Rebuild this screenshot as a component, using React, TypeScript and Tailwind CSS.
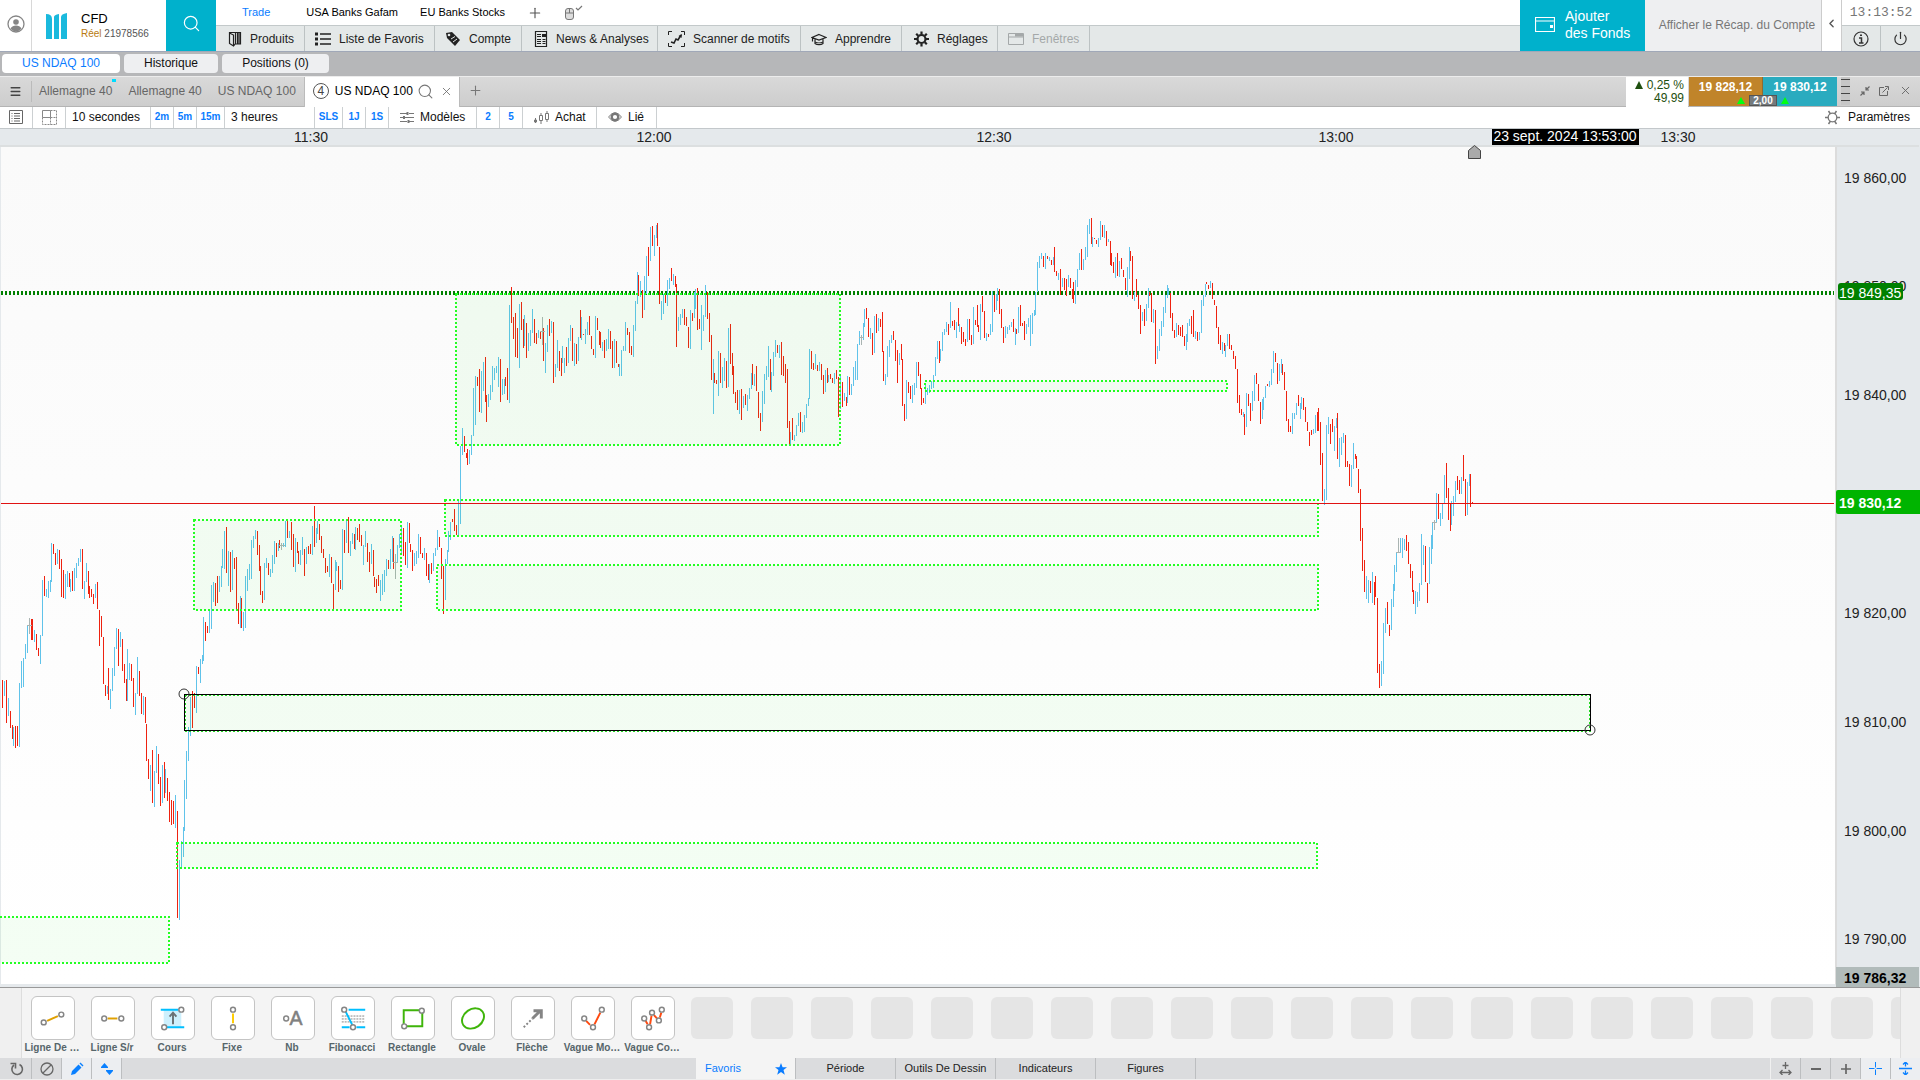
import type { ReactNode } from "react";
import { ChevronLeft, Menu, Plus, Power, Search, X } from "lucide-react";

// One entry per bar: direction (r = down, b = up, g = unchanged), x, high, low
const BARS = `
r2 680 708,b4 681 696,r6 680 723,b8 698 716,r10 711 728,r12 725 739,b13 727 746,r15 726 748,r17 726 746,b19 683 747,
b21 661 688,b23 658 687,b25 644 659,b27 625 653,g29 618 634,r31 619 640,r32 619 640,b34 630 642,r36 634 650,r38 648 656,
b40 635 664,b42 580 636,r44 576 596,b46 589 597,b48 581 598,b50 580 592,b51 543 582,r53 544 554,r55 553 565,b57 549 564,
r59 550 569,r61 559 597,r63 570 598,b65 574 599,b67 571 587,r69 573 587,b70 579 592,r72 571 591,b74 568 591,b76 563 578,
b78 558 566,b80 549 562,r82 549 589,b84 581 599,b86 563 582,r88 571 594,r89 586 598,r91 589 597,r93 594 604,b95 584 598,
r97 582 609,r99 610 646,r101 616 637,r103 637 684,r105 685 696,b107 686 694,r108 668 700,b110 689 709,b112 668 691,
b114 647 676,b116 628 649,r118 629 666,b120 632 647,r122 639 671,r124 664 683,r126 679 701,b127 649 701,b129 663 680,
r131 664 681,r133 678 707,b135 693 715,b137 657 694,r139 671 696,r141 693 714,b143 696 715,r145 697 723,r146 724 761,
r148 759 779,b150 765 791,r152 750 803,b154 771 807,b156 746 773,r158 754 784,r160 777 806,b162 765 803,r164 762 798,
b165 769 793,r167 778 801,r169 792 822,r171 800 825,r173 801 824,b175 795 828,r177 811 918,b179 860 920,b181 841 868,
b183 827 857,b184 780 831,b186 751 799,b188 727 761,b190 697 736,r192 691 728,r194 693 708,b196 666 713,r198 667 674,
b200 659 683,b202 655 664,b203 617 661,r205 622 641,r207 626 633,b209 610 633,b211 585 629,b213 582 602,r215 583 606,
r217 576 603,b219 576 592,b221 566 587,b222 549 568,b224 531 569,r226 527 573,b228 551 586,r230 552 592,b232 550 590,
r234 558 569,r236 557 609,r238 603 624,b240 596 628,r241 598 628,b243 612 631,b245 576 628,b247 569 591,b249 564 580,
b251 540 579,b253 536 548,b255 530 539,r257 531 555,r259 545 571,r260 566 595,r262 591 603,b264 563 600,b266 558 568,
r268 563 575,b270 569 577,b272 555 573,b274 541 564,r276 543 557,b278 543 551,r279 540 548,g281 543 550,b283 543 547,
b285 521 547,r287 520 538,b289 531 538,r291 522 550,r293 534 567,b295 538 572,r297 542 553,r298 551 564,b300 550 565,
b302 537 555,r304 549 576,b306 547 564,r308 546 554,r310 544 554,b312 526 555,r314 506 547,b316 528 543,b317 521 534,
r319 524 540,r321 536 553,r323 549 558,r325 558 573,r327 566 572,b329 554 577,r331 557 583,r333 584 610,b335 560 590,
b336 562 571,r338 566 592,r340 580 589,b342 529 590,r344 530 553,b346 520 543,r348 517 553,b350 541 556,b352 533 544,
r354 534 549,b355 527 550,r357 528 540,r359 524 542,r361 535 546,b363 545 565,b365 531 547,r367 543 562,r369 552 572,
b371 544 564,r373 550 576,r374 577 587,r376 579 593,r378 575 586,b380 580 601,b382 574 595,b384 570 592,b386 559 576,
r388 560 569,b390 549 569,b392 536 562,r393 538 569,g395 554 579,b397 545 563,b399 534 548,b401 527 555,r403 528 556,
r405 542 565,b407 522 568,r409 523 543,r410 544 552,r412 550 571,b414 553 566,b416 551 564,b418 534 558,r420 537 554,
r422 553 558,b424 548 560,r426 553 576,r428 564 580,b429 564 583,r431 563 574,b433 553 571,b435 548 556,b437 530 550,
r439 537 547,r441 548 579,r443 566 614,b445 559 600,b447 550 564,b448 531 552,b450 522 540,r452 519 522,r454 509 531,
r456 525 535,b458 500 535,b460 446 524,b462 428 455,r464 436 452,r466 453 458,r467 449 465,b469 450 464,b471 435 455,
b473 388 436,b475 376 425,r477 377 386,r479 369 412,b481 371 413,b483 362 391,r485 357 402,r486 395 422,b488 394 407,
b490 385 400,b492 366 392,b494 368 380,b496 366 373,b498 357 387,r500 359 402,b502 379 395,b504 379 394,r505 377 386,
r507 368 400,b509 305 403,r511 287 323,r513 317 339,r515 313 357,r517 328 358,b519 304 368,r521 302 330,r523 319 348,
b524 315 346,r526 323 358,b528 333 351,b530 330 346,b532 309 333,r534 319 343,r536 333 344,b538 330 338,r540 331 339,
g542 317 345,r543 328 361,b545 343 373,b547 325 352,r549 319 336,b551 321 333,r553 322 383,b555 364 377,b557 340 368,
r559 351 371,r561 358 376,b562 346 363,b564 358 373,r566 347 366,b568 338 363,b570 325 341,r572 328 361,b574 343 366,
r576 344 364,b578 337 361,r580 310 338,b581 317 340,r583 334 335,b585 329 344,b587 322 335,r589 316 335,r591 336 349,
r593 349 355,b595 316 358,r597 318 330,r599 331 345,r600 332 348,b602 342 351,r604 340 358,b606 339 351,b608 329 349,
r610 331 349,r612 341 368,b614 339 368,r616 341 363,r618 364 367,b619 364 376,b621 350 376,b623 346 351,b625 322 351,
r627 328 335,r629 332 353,r631 346 355,b633 325 357,b635 301 331,b637 272 304,r638 275 296,b640 281 297,r642 290 318,
b644 276 310,b646 256 294,r648 247 276,b650 227 261,r652 226 246,b654 235 256,b656 225 238,r657 223 246,r659 247 304,
b661 301 320,b663 294 314,r665 294 303,b667 280 306,b669 278 289,r671 268 281,b673 274 285,r675 276 287,r676 284 347,
b678 317 331,b680 314 325,b682 309 318,r684 309 325,r686 317 326,r688 327 348,b690 310 349,r692 313 321,b694 292 318,
b695 289 309,r697 288 330,r699 319 329,b701 305 350,b703 315 331,b705 285 317,r707 292 319,r709 313 342,r711 335 380,
b713 359 414,r714 373 383,r716 380 384,b718 351 396,r720 353 383,b722 367 388,b724 358 381,r726 361 388,b728 328 387,
r730 324 364,r732 353 375,r733 366 394,r735 392 403,r737 390 410,b739 390 414,r741 389 420,b743 396 408,r745 394 405,
b747 395 411,b749 388 399,b751 373 389,r752 364 385,b754 374 386,r756 366 391,r758 392 418,r760 413 431,b762 391 422,
b764 374 404,b766 366 380,b768 346 377,r770 359 390,b771 372 392,b773 352 376,b775 340 357,r777 345 353,b779 345 358,
r781 342 375,r783 356 376,r785 364 383,r787 369 428,r789 421 444,b790 432 444,r792 418 440,b794 435 441,b796 425 436,
b798 413 426,r800 412 432,b802 422 433,b804 415 432,b806 404 418,b808 398 406,b809 349 399,r811 351 369,r813 363 370,
b815 354 369,r817 365 371,b819 362 371,r821 364 380,r823 375 394,b825 370 392,r827 368 383,b828 375 382,r830 374 379,
r832 378 383,b834 373 384,r836 370 379,r838 377 417,b840 375 409,r842 382 407,b844 393 401,r846 397 406,b847 376 403,
r849 377 395,b851 384 395,b853 367 386,b855 361 380,b857 344 380,b859 331 345,g861 335 345,b863 323 340,b864 309 327,
r866 308 319,r868 318 337,b870 328 339,r872 333 355,b874 316 353,r876 314 333,b878 318 331,r880 319 327,r882 312 352,
r883 351 381,b885 374 385,b887 346 377,b889 340 357,b891 335 343,r893 331 340,r895 340 361,r897 350 383,b899 353 365,
r901 344 360,r902 359 406,r904 404 421,b906 380 419,r908 382 393,r910 386 399,b912 385 403,b914 383 395,b916 362 388,
r918 362 376,r920 374 389,r921 388 405,r923 398 403,b925 383 404,b927 388 395,b929 385 393,b931 381 389,b933 375 388,
b935 357 376,b937 341 359,r939 341 363,b940 349 361,b942 332 351,b944 329 335,b946 322 332,r948 324 335,b950 302 328,
r952 321 326,r954 320 330,b956 322 338,r958 308 326,b959 324 332,r961 327 344,r963 332 342,r965 339 346,b967 319 342,
r969 319 340,r971 335 345,b973 307 344,r975 320 325,r977 305 327,r978 325 332,b980 304 340,r982 296 312,r984 311 338,
b986 333 341,r988 334 337,b990 324 335,b992 291 332,r994 295 312,b996 294 310,b997 288 301,r999 289 314,r1001 309 328,
r1003 327 343,b1005 326 338,b1007 327 334,b1009 325 330,b1011 322 327,r1013 319 332,b1015 328 345,r1016 329 334,
b1018 307 333,r1020 305 326,r1022 323 326,r1024 321 340,b1026 324 334,b1028 318 327,b1030 315 346,b1032 313 334,
b1034 310 316,b1035 292 315,b1037 262 292,b1039 256 268,b1041 253 259,r1043 256 267,b1045 253 269,r1047 256 259,
b1049 257 261,r1051 260 265,b1053 257 265,r1054 247 272,r1056 271 276,b1058 273 280,r1060 269 295,b1062 278 287,
r1064 278 290,r1066 279 296,b1068 275 287,r1070 278 288,r1072 289 299,r1073 282 303,b1075 280 304,b1077 269 287,
b1079 253 270,r1081 249 270,b1083 259 270,b1085 247 260,b1087 225 257,b1089 219 234,r1091 218 244,b1092 237 247,
r1094 238 239,r1096 240 244,b1098 238 247,b1100 221 240,r1102 225 237,b1104 225 238,r1106 231 246,b1108 239 242,
r1110 241 265,r1111 253 266,r1113 262 273,b1115 257 278,r1117 253 276,b1119 261 277,r1121 258 269,r1123 270 277,
r1125 278 290,b1127 267 297,b1129 247 279,r1130 251 261,r1132 256 299,b1134 292 301,r1136 279 297,r1138 295 309,
r1140 305 334,b1142 312 321,r1144 309 326,b1146 304 321,b1148 288 308,r1149 292 296,r1151 293 322,b1153 309 323,
r1155 310 364,b1157 346 359,b1159 329 351,b1161 321 336,b1163 307 327,b1165 295 313,b1167 285 298,b1168 288 295,
r1170 293 318,r1172 313 331,r1174 330 338,b1176 323 337,r1178 325 335,r1180 327 336,r1182 325 337,r1184 336 346,
b1186 334 350,b1187 323 342,b1189 319 326,r1191 316 334,r1193 310 337,b1195 331 339,r1197 332 341,b1199 332 340,
b1201 300 333,b1203 295 306,b1205 284 297,r1206 282 284,r1208 285 289,b1210 281 288,r1212 283 299,r1214 300 305,
r1216 306 328,r1218 327 344,r1220 335 350,b1222 342 354,r1224 343 351,b1225 345 357,b1227 334 346,r1229 334 349,
r1231 345 350,r1233 351 359,r1235 356 369,r1237 369 403,r1239 395 413,r1241 409 415,b1243 412 417,r1244 414 435,
b1246 393 427,r1248 394 406,r1250 403 421,b1252 391 411,b1254 375 401,r1256 373 384,r1258 384 401,r1260 402 424,
b1262 399 419,b1263 397 410,b1265 386 398,r1267 384 386,b1269 381 387,b1271 369 385,b1273 351 373,r1275 353 362,
r1277 363 384,b1279 364 381,b1281 359 373,r1282 364 375,r1284 372 390,r1286 391 421,r1288 419 432,r1290 426 432,
b1292 413 434,b1294 413 419,b1296 403 415,r1298 395 406,b1300 403 419,b1301 397 409,r1303 398 410,r1305 407 422,
r1307 422 431,r1309 432 446,r1311 430 435,b1313 429 434,b1315 415 433,r1317 412 431,r1318 408 431,r1320 422 465,
r1322 453 501,b1324 489 505,b1326 425 500,b1328 417 434,r1330 424 444,r1332 419 432,b1334 426 451,b1336 418 428,
r1337 413 459,b1339 438 467,b1341 437 455,b1343 433 443,r1345 435 467,r1347 461 467,r1349 464 486,b1351 465 487,
b1353 443 469,r1355 454 459,r1356 456 468,r1358 469 493,r1360 489 541,r1362 528 571,r1364 560 592,b1366 576 599,
b1368 580 603,r1370 581 593,b1372 572 603,r1374 582 605,r1375 576 597,r1377 598 673,r1379 664 688,b1381 661 686,
b1383 623 674,b1385 608 633,r1387 602 624,r1389 625 636,b1391 599 630,b1393 584 607,b1394 565 591,b1396 552 572,
g1398 538 553,b1400 538 553,b1402 538 558,b1404 539 550,r1406 535 551,r1408 542 564,r1410 564 578,r1412 571 592,
r1413 590 604,b1415 591 614,b1417 592 607,b1419 583 601,b1421 534 585,b1423 545 565,r1425 546 582,r1427 583 603,
b1429 547 584,b1431 535 564,b1432 522 549,g1434 520 530,b1436 493 523,r1438 494 519,b1440 513 526,b1442 504 519,
b1444 475 504,r1446 463 498,r1448 488 520,r1450 504 531,b1451 501 525,b1453 496 516,b1455 481 502,r1457 476 490,
r1459 480 494,b1461 477 494,r1463 455 481,r1465 479 516,b1467 482 515,b1469 474 486,r1470 474 507,r1472 502 504`;

function barPath(kind: string) {
  return BARS.split(",")
    .map((b) => b.trim())
    .filter((b) => b[0] === kind)
    .map((b) => {
      const [x, high, low] = b.slice(1).split(" ").map(Number);
      return `M${x} ${high}h1V${low}h-1z`;
    })
    .join("");
}

// x, y, width, height
const ZONES = [
  [194, 520, 207, 90],
  [-4, 917, 173, 46],
  [177, 843, 1140, 25],
  [445, 500, 873, 36],
  [437, 565, 881, 45],
  [456, 294, 384, 151],
  [925, 381, 302, 10],
];

const TIMES = [
  { x: 311, label: "11:30" },
  { x: 654, label: "12:00" },
  { x: 994, label: "12:30" },
  { x: 1336, label: "13:00" },
  { x: 1678, label: "13:30" },
];

const PRICES = [
  { y: 178, label: "19 860,00" },
  { y: 286, label: "19 850,00" },
  { y: 395, label: "19 840,00" },
  { y: 613, label: "19 820,00" },
  { y: 722, label: "19 810,00" },
  { y: 831, label: "19 800,00" },
  { y: 939, label: "19 790,00" },
];

type IconProps = { w?: number; h?: number; className?: string; children: ReactNode };

function Icon({ w = 16, h = 16, className = "", children }: IconProps) {
  return (
    <svg width={w} height={h} viewBox={`0 0 ${w} ${h}`} fill="none" stroke="currentColor" className={`shrink-0 ${className}`} aria-hidden="true">
      {children}
    </svg>
  );
}

const NAV = [
  {
    label: "Produits",
    width: "w-[89px] pl-3",
    icon: (
      <Icon w={14}>
        <path d="M1.500 1.500h6v11l-2 2.500-4-2.500zM7.500 1.500h5v11.500h-5M9.500 2v11M11 2v11M1.500 2l4 2v11" strokeWidth="1.200" />
      </Icon>
    ),
  },
  {
    label: "Liste de Favoris",
    width: "w-[130px] pl-2.5",
    icon: (
      <Icon>
        <path d="M5 3h11M5 8h11M5 13h11" strokeWidth="1.500" />
        <path d="M0 3h3M0 8h3M0 13h3" strokeWidth="3" />
      </Icon>
    ),
  },
  {
    label: "Compte",
    width: "w-[87px] pl-2.5",
    icon: (
      <Icon>
        <path d="M1 2l6-1 8 8-5 6-8-8z" fill="currentColor" stroke="none" />
        <circle cx="4" cy="4" r="1.300" fill="#e4e8e8" stroke="none" />
        <path d="M6 8l4-2.500M8 11l4-3" stroke="#e4e8e8" strokeWidth="1" />
      </Icon>
    ),
  },
  {
    label: "News & Analyses",
    width: "w-[136px] pl-3",
    icon: (
      <Icon w={14}>
        <path d="M1.500 .500h11v15h-11z" strokeWidth="1.200" />
        <path d="M3 3.500h4M3 5.500h4M3 8.500h4M3 10.500h4M3 12.500h4M8.500 8.500h3M8.500 10.500h3M8.500 12.500h3" />
        <path d="M8 3h4v3H8z" fill="currentColor" stroke="none" />
      </Icon>
    ),
  },
  {
    label: "Scanner de motifs",
    width: "w-[143px] pl-2.5",
    icon: (
      <Icon w={17}>
        <path d="M.500 4V.500H4M13 .500h3.500V4M.500 12v3.500H4M13 15.500h3.500V12" />
        <path d="M3 11l3 1 2-4 2 1 3-5" strokeWidth="1.600" />
        <path d="M14 3l-.500 4L10.500 5z" fill="currentColor" stroke="none" />
      </Icon>
    ),
  },
  {
    label: "Apprendre",
    width: "w-[101px] pl-2.5",
    icon: (
      <Icon>
        <path d="M8 3.500L15 6.500 8 9 1 6.500zM4 8v4.500c2 1.500 6 1.500 8 0V8M4 11c2 1 6 1 8 0M1.500 7v3.500" strokeWidth="1.200" />
      </Icon>
    ),
  },
  {
    label: "Réglages",
    width: "w-[96px] pl-3",
    icon: (
      <Icon w={15}>
        <circle cx="7.500" cy="8" r="4" strokeWidth="2.200" />
        <path d="M7.500 .500v3M7.500 12.500v3M0 8h3M12 8h3M2.200 2.700l2 2M10.800 11.300l2 2M2.200 13.300l2-2M10.800 4.700l2-2" strokeWidth="2.200" />
      </Icon>
    ),
  },
];

const TILES = [
  {
    label: "Ligne De …",
    art: (
      <>
        <circle cx="12" cy="26" r="2.500" />
        <circle cx="30" cy="18" r="2.500" />
        <path d="M15.500 24.500L26.500 19.500" stroke="#e0a000" strokeWidth="2" />
      </>
    ),
  },
  {
    label: "Ligne S/r",
    art: (
      <>
        <path d="M16 22h10" stroke="#e0a000" strokeWidth="2" />
        <circle cx="12.500" cy="22" r="2.500" />
        <circle cx="30" cy="22" r="2.500" />
      </>
    ),
  },
  {
    label: "Cours",
    art: (
      <>
        <path d="M12 13h18v18H12z" fill="#cdf0fd" stroke="none" />
        <path d="M9 13h18M15 31h18" stroke="#00bfff" strokeWidth="2" />
        <path d="M21.500 28V17M18 20l3.500-4 3.500 4" stroke="#6a7275" strokeWidth="2" />
        <circle cx="30" cy="13" r="2.500" fill="#fff" />
        <circle cx="12.500" cy="31" r="2.500" fill="#fff" />
      </>
    ),
  },
  {
    label: "Fixe",
    art: (
      <>
        <path d="M21.500 17v10" stroke="#ffcc00" strokeWidth="2" />
        <circle cx="21.500" cy="13" r="2.500" />
        <circle cx="21.500" cy="31" r="2.500" />
      </>
    ),
  },
  {
    label: "Nb",
    art: (
      <>
        <circle cx="14.500" cy="22" r="2.500" />
        <text x="18" y="29" fontSize="20" fill="#808080" stroke="#808080" strokeWidth=".5">A</text>
      </>
    ),
  },
  {
    label: "Fibonacci",
    art: (
      <>
        <path d="M10 19.500h24M10 22.500h24M10 25.500h24" strokeWidth="1" strokeDasharray="2 1" />
        <path d="M17 13h17M10 31h8M25 31h9M14 15l7 14" stroke="#00bfff" strokeWidth="2" />
        <circle cx="12.500" cy="13" r="2.500" fill="#fff" />
        <circle cx="21.500" cy="31" r="2.500" fill="#fff" />
      </>
    ),
  },
  {
    label: "Rectangle",
    art: (
      <>
        <path d="M12 13.500h19V30H12z" stroke="#3fb50a" strokeWidth="2" />
        <circle cx="30.500" cy="14" r="2.500" fill="#fff" />
        <circle cx="12.500" cy="30" r="2.500" fill="#fff" />
      </>
    ),
  },
  {
    label: "Ovale",
    art: <ellipse cx="21.500" cy="22" rx="12" ry="9.500" transform="rotate(-35 21.500 22)" stroke="#3fb50a" strokeWidth="2" />,
  },
  {
    label: "Flèche",
    art: (
      <>
        <path d="M12 31l9-9" strokeWidth="2" strokeDasharray="2 2" />
        <path d="M21 22l8-8M22 14h8v8" strokeWidth="3" />
      </>
    ),
  },
  {
    label: "Vague Mo…",
    art: (
      <>
        <path d="M14.500 24.500l4 4M23 28l6-12" stroke="#ff4a10" strokeWidth="2" />
        <circle cx="12.500" cy="22" r="2.500" />
        <circle cx="21.500" cy="31" r="2.500" />
        <circle cx="30.500" cy="13" r="2.500" />
      </>
    ),
  },
  {
    label: "Vague Co…",
    art: (
      <>
        <path d="M14 24.500l2 3.500M18.500 28l1.500-9M22.500 18.500l3 3.500M28.500 21l1.500-5" stroke="#ff4a10" strokeWidth="2" />
        <circle cx="12.500" cy="22" r="2.500" />
        <circle cx="17.500" cy="31" r="2.500" />
        <circle cx="20.500" cy="16" r="2.500" />
        <circle cx="27.500" cy="24" r="2.500" />
        <circle cx="30.500" cy="13" r="2.500" />
      </>
    ),
  },
];

function Header() {
  return (
    <header className="flex h-[52px] border-b border-[#a0a8b8] bg-white">
      <button aria-label="Profil" className="flex w-8 shrink-0 items-center justify-center border-r border-[#d8d8d8] pb-1 text-[#858585]">
        <Icon w={18} h={18}>
          <circle cx="9" cy="9" r="8" strokeWidth="1.300" />
          <circle cx="9" cy="7" r="2.800" fill="currentColor" stroke="none" />
          <path d="M3.500 13.500c2-4 9-4 11 0-3 4-8 4-11 0z" fill="currentColor" stroke="none" />
        </Icon>
      </button>
      <div className="flex w-[134px] shrink-0 items-center pl-3.5">
        <Icon w={21} h={26} className="text-[#1ab9dd]">
          <path d="M0 1q6 0 6 5v20H0zM8 4q0-2 5-3v25H8zM15 4q0-3 6-4v26h-6z" fill="currentColor" stroke="none" />
        </Icon>
        <div className="ml-3.5">
          <div className="text-[13px] leading-[17px] text-black">CFD</div>
          <div className="whitespace-nowrap text-[10px] leading-[14px] text-[#555]">
            <span className="text-[#b87a10]">Réel</span> 21978566
          </div>
        </div>
      </div>
      <button aria-label="Rechercher" className="flex w-[50px] shrink-0 items-center justify-center bg-[#00b1cc] pb-1 text-white">
        <Search size={19} strokeWidth={1.5} />
      </button>

      <div className="flex min-w-0 flex-1 flex-col">
        <div className="flex h-[25px] items-center gap-[22px] pl-[26px] text-[11px] text-black">
          <a href="#trade" className="mr-3.5 text-[#0a7cff]">Trade</a>
          <a href="#usa">USA Banks Gafam</a>
          <a href="#eu">EU Banks Stocks</a>
          <button aria-label="Ajouter une disposition" className="text-[#555]"><Plus size={16} strokeWidth={1.7} /></button>
          <button aria-label="Souris" className="text-[#777]">
            <Icon w={18} h={16}>
              <rect x=".5" y="3.500" width="8" height="11" rx="2.500" fill="#ddd" />
              <path d="M.500 8h8M4.500 3.500V8" />
              <path d="M11 3l2 2 4-4" strokeWidth="1.200" />
            </Icon>
          </button>
        </div>
        <nav className="flex flex-1 border-t border-[#c3c9ca] bg-[#e4e8e8] text-xs text-[#222]">
          {NAV.map((item) => (
            <a key={item.label} href="#nav" className={`flex shrink-0 items-center gap-2 whitespace-nowrap border-r border-[#bcc2c3] ${item.width}`}>
              {item.icon}
              {item.label}
            </a>
          ))}
          <button disabled className="flex w-[92px] items-center gap-2 border-r border-[#bcc2c3] pl-2.5 text-[#a4a8a9]">
            <Icon h={12}>
              <path d="M.500 .500h15v11H.500zM.500 4h15" />
              <path d="M7 1h8v2.500H7z" fill="currentColor" stroke="none" />
            </Icon>
            Fenêtres
          </button>
        </nav>
      </div>

      <button className="flex w-[125px] shrink-0 items-center gap-2.5 bg-[#00b1cc] pb-2.5 pl-[15px] text-left text-sm leading-[17px] text-white">
        <Icon w={20} h={15} className="mt-2">
          <path d="M.500 .500h19v14H.500zM.500 4h19" strokeWidth="1.200" />
          <path d="M15 8h3v3h-3z" fill="currentColor" stroke="none" />
        </Icon>
        <span className="mt-2">Ajouter<br />des Fonds</span>
      </button>
      <button className="w-[177px] shrink-0 whitespace-nowrap border-r border-[#ccc] bg-[#eeeff1] pb-0.5 pl-2 text-xs text-[#777]">Afficher le Récap. du Compte</button>
      <button aria-label="Réduire" className="flex w-[19px] shrink-0 items-center justify-center pb-1 text-[#555]"><ChevronLeft size={13} strokeWidth={2.500} /></button>
      <div className="flex w-[79px] shrink-0 flex-col border-l border-[#ccc]">
        <time className="flex h-[25px] items-center justify-center font-['Liberation_Mono',monospace] text-[13px] text-[#777]">13:13:52</time>
        <div className="grid flex-1 grid-cols-2 border-t border-[#c3c9ca] bg-[#e4e8e8] text-[#333]">
          <button aria-label="Informations" className="flex items-center justify-center border-r border-[#bcc2c3]">
            <Icon>
              <circle cx="8" cy="8" r="7" strokeWidth="1.200" />
              <path d="M6 7h2.500v5M6 12h4.500" strokeWidth="1.500" />
              <path d="M7 3.500h2v1.500H7z" fill="currentColor" stroke="none" />
            </Icon>
          </button>
          <button aria-label="Déconnexion" className="flex items-center justify-center"><Power size={15} strokeWidth={1.900} /></button>
        </div>
      </div>
    </header>
  );
}

function WorkspaceTabs() {
  return (
    <div className="flex h-6 gap-1 bg-[#b6b7b9] px-0.5 pt-0.5 text-xs leading-[18px] text-[#111]">
      <button className="h-[19px] w-[118px] rounded-sm bg-white pb-px text-[#0a7cff]">US NDAQ 100</button>
      <button className="h-[19px] w-[94px] rounded-sm bg-[#eeeff1] pb-px">Historique</button>
      <button className="h-[19px] w-[107px] rounded-sm bg-[#eeeff1] pb-px">Positions (0)</button>
    </div>
  );
}

function ChartTabs() {
  return (
    <div className="flex h-[31px] border-t border-b border-t-[#ececec] border-b-[#b4b4b4] bg-linear-to-b from-[#d9d9d9] to-[#cdcdcd] text-xs text-[#666]">
      <button aria-label="Menu" className="my-1 flex w-8 items-center justify-center border-r border-[#bbb] text-[#444]"><Menu size={13} strokeWidth={2.500} /></button>
      <button className="relative ml-[7px] pb-0.5">
        Allemagne 40
        <span className="absolute -right-1 top-0.5 h-[3px] w-1 bg-[#00dcff]" />
      </button>
      <button className="ml-4 pb-0.5">Allemagne 40</button>
      <button className="ml-4 mr-2 pb-0.5">US NDAQ 100</button>
      <div className="-mb-px flex w-[156px] items-center border-x border-[#bbb] bg-white pb-0.5 pl-2 text-black">
        <span className="mr-1.5 flex size-4 items-center justify-center rounded-full border border-[#555] text-[#444]">4</span>
        US NDAQ 100
        <button aria-label="Chercher un produit" className="ml-1 text-[#777]"><Search size={17} strokeWidth={1.500} /></button>
        <button aria-label="Fermer l'onglet" className="ml-1.5 text-[#666]"><X size={13} strokeWidth={1.500} /></button>
      </div>
      <button aria-label="Nouvel onglet" className="ml-2 pb-0.5 text-[#777]"><Plus size={15} strokeWidth={1.700} /></button>

      <div className="-mb-px ml-auto w-[62px] bg-white pr-1 text-right leading-[13px] text-[#1f5010]">
        <div className="mt-0.5 whitespace-nowrap"><span className="mr-1 inline-block h-0 w-0 border-x-[4px] border-b-[8px] border-x-transparent" />0,25 %</div>
        <div>49,99</div>
      </div>
      <div className="relative ml-px flex font-bold text-white">
        <button className="w-[74px] border-r border-[#8f6a30] bg-[#c0842a] pb-2.5 text-center">19 828,12</button>
        <button className="w-[74px] bg-[#2aabbf] pb-2.5 text-center">19 830,12</button>
        <div className="absolute inset-x-0 bottom-0 flex items-end justify-center gap-1">
          <span className="mb-0.5 h-0 w-0 border-x-[4px] border-b-[7px] border-x-transparent border-b-[#00ff10]" />
          <span className="border border-[#555] bg-[#747a7d] px-[3px] text-[10px] leading-[9px]">2,00</span>
          <span className="mb-0.5 h-0 w-0 border-x-[4px] border-b-[7px] border-x-transparent border-b-[#00ff10]" />
        </div>
      </div>
      <div className="flex w-[83px] items-center justify-between pb-0.5 pl-1 pr-2 text-[#666]">
        <Icon w={9} h={28} className="bg-[#c6c6c6]"><path d="M0 2.500h9M0 9.500h9M0 16.500h9M0 23.500h9" stroke="#444" /></Icon>
        <button aria-label="Réduire le graphique">
          <Icon w={10} h={10}><path d="M9.500 .500L6 4M6 1v3h3M.500 9.500L4 6M1 6h3v3" strokeWidth="1.200" /></Icon>
        </button>
        <button aria-label="Détacher">
          <Icon w={10} h={10}><path d="M5 1.500H.500v8h8V5M3.500 6.500l5-5M6 .500h3.500V4" /></Icon>
        </button>
        <button aria-label="Fermer le graphique"><X size={13} strokeWidth={1.700} /></button>
      </div>
    </div>
  );
}

function ChartToolbar() {
  const quick = "border-r border-[#ccd0d2] text-[10px] font-bold text-[#0a7cff]";
  return (
    <div className="flex h-[22px] border-b border-[#c3c8cb] bg-white text-xs leading-[18px] text-[#111] *:pb-px">
      <button aria-label="Liste" className="flex w-[33px] items-center justify-center border-r border-[#ccd0d2] text-[#666]">
        <Icon w={14} h={14}><path d="M.500 .500h13v13H.500zM5 3.500h6M5 6h6M5 8.500h6M5 11h6M2.500 3.500h1M2.500 6h1M2.500 8.500h1M2.500 11h1" /></Icon>
      </button>
      <button aria-label="Grille" className="flex w-[33px] items-center justify-center border-r border-[#ccd0d2] text-[#888]">
        <Icon w={15} h={15}><path d="M.500 .500h8v7h-8z" /><path d="M8.500 .500h6v14h-14v-7M8.500 7.500h6M8.500 7.500v7" strokeDasharray="2 1" /></Icon>
      </button>
      <button className="w-[85px] border-r border-[#ccd0d2] pr-1">10 secondes</button>
      <button className={`w-[23px] ${quick}`}>2m</button>
      <button className={`w-[23px] ${quick}`}>5m</button>
      <button className={`w-7 ${quick}`}>15m</button>
      <button className="w-[90px] border-r border-[#ccd0d2] pl-1.5 text-left">3 heures</button>
      <button className={`w-7 ${quick}`}>SLS</button>
      <button className={`w-[23px] ${quick}`}>1J</button>
      <button className={`w-[23px] ${quick}`}>1S</button>
      <button className="flex w-[88px] items-center gap-1.5 border-r border-[#ccd0d2] pl-[11px]">
        <Icon w={14} h={13} className="text-[#777]"><path d="M0 2.500h7M9 2.500h5M0 6.500h3M5 6.500h9M0 10.500h7M9 10.500h5" /><path d="M7.500 1v3M4 5v3M8.500 9v3" strokeWidth="2" /></Icon>
        Modèles
      </button>
      <button className={`w-[23px] ${quick}`}>2</button>
      <button className={`w-[23px] ${quick}`}>5</button>
      <button className="flex w-[74px] items-center gap-1.5 border-r border-[#ccd0d2] pl-[11px]">
        <Icon w={15} h={13} className="text-[#777]"><path d="M1.500 7v5M.500 9h2v2h-2zM5.500 4.500h3v5h-3zM7 2v2.500M7 9.500V13M11.500 2.500h3v6h-3zM13 0v2.500M13 8.500V11" /></Icon>
        Achat
      </button>
      <button className="flex w-[60px] items-center gap-1.5 border-r border-[#ccd0d2] pl-[11px]">
        <Icon w={14} h={12} className="text-[#777]"><path d="M.500 6Q7-2.500 13.500 6 7 14.500 .500 6z" /><circle cx="7" cy="6" r="3.300" strokeWidth="2.400" /></Icon>
        Lié
      </button>
      <button className="ml-auto flex items-center gap-2 pr-2.5">
        <Icon w={15} h={15} className="text-[#777]">
          <circle cx="7.500" cy="7.500" r="4.300" strokeWidth="1.300" />
          <path d="M0 7.500h3M12 7.500h3M3.500 1l2 3M11.500 1l-2 3M3.500 14l2-3M11.500 14l-2-3" strokeWidth="1.500" />
        </Icon>
        Paramètres
      </button>
    </div>
  );
}

function Chart() {
  return (
    <main className="flex min-h-0 flex-1 flex-col bg-[#e5e9ec] pr-px">
      <svg className="block h-[18px] w-full shrink-0 border-b-2 border-[#dcdfe0]" fontSize="14" textAnchor="middle" fill="#222" aria-label="Temps">
        {TIMES.map((t) => <text key={t.label} x={t.x} y="13">{t.label}</text>)}
        <rect x="1492" width="147" height="16" fill="#000" />
        <text x="1565" y="12" fill="#fff">23 sept. 2024 13:53:00</text>
      </svg>
      <div className="flex min-h-0 flex-1">
        <div className="min-w-0 flex-1 border-b-[3px] border-l border-r-2 border-[#e5e9ec] border-r-[#dcdcdc] bg-linear-to-b from-[#fafafa] to-white">
          <svg className="block h-full w-full overflow-visible" shapeRendering="crispEdges" aria-label="US NDAQ 100">
            <g transform="translate(-1 -147)">
              <line x1="1" x2="100%" y1="293" y2="293" stroke="#008000" strokeWidth="4" strokeDasharray="2 2" />
              <path d={barPath("r")} fill="#ee2210" />
              <path d={barPath("b")} fill="#60c3ea" />
              <path d={barPath("g")} fill="#aab4b2" />
              <path d="M27 625h5M279 545h6M393 562h5M540 331h5M859 337h5M1396 552h5M1432 522h5" stroke="#aab4b2" transform="translate(0 .5)" />
              {ZONES.map(([x, y, w, h]) => (
                <rect key={`${x}-${y}`} x={x} y={y} width={w} height={h} fill="#30f030" fillOpacity=".05" stroke="#22ff22" strokeWidth="2" strokeDasharray="2 2" />
              ))}
              <rect x="185" y="695" width="1405" height="36" fill="#30f030" fillOpacity=".05" stroke="#22d822" strokeWidth="2" strokeDasharray="2 2" />
              <rect x="184.500" y="694.500" width="1406" height="36" stroke="#000" fill="none" />
              <line x1="1" x2="100%" y1="503.500" y2="503.500" stroke="#e01212" />
              <g fill="none" stroke="#333" shapeRendering="geometricPrecision">
                <circle cx="184" cy="694" r="5" />
                <circle cx="1590" cy="730" r="5" />
              </g>
              <path d="M1468.500 158.500v-8l6-5 6 5v8z" fill="#aaa" stroke="#444" shapeRendering="geometricPrecision" />
            </g>
          </svg>
        </div>
        <svg className="block h-full w-[82px] shrink-0 overflow-visible" fontSize="14" fill="#222" aria-label="Prix">
          {PRICES.map((p) => <text key={p.label} x="7" y={p.y - 142}>{p.label}</text>)}
          <rect x="1" y="136" width="65" height="17" rx="3" fill="#008000" />
          <text x="2" y="151" fill="#fff">19 849,35</text>
          <rect x="-1" y="343" width="86" height="24" rx="2" fill="#00b400" />
          <g fontWeight="bold">
            <text x="2" y="361" fill="#fff">19 830,12</text>
            <rect x="-1" y="820" width="83" height="20" fill="#b1bbba" />
            <text x="7" y="836" fill="#000">19 786,32</text>
          </g>
        </svg>
      </div>
    </main>
  );
}

function DrawingTools() {
  return (
    <section className="flex h-[71px] border-t border-[#999] bg-[#f0f0f0]">
      <div className="ml-[21px] mr-[19px] flex min-w-0 flex-1 overflow-hidden border-x border-[#ddd] bg-[#f4f4f4] pt-2">
        {TILES.map((tile) => (
          <div key={tile.label} className="flex w-[60px] shrink-0 flex-col items-center">
            <button aria-label={tile.label} className="ml-0.5 size-11 rounded-md border border-[#c4c4c4] bg-white">
              <svg width="42" height="42" viewBox="0 0 43 43" fill="none" stroke="#858585" strokeWidth="1.500" aria-hidden="true">{tile.art}</svg>
            </button>
            <span className="mt-0.5 whitespace-nowrap text-[10px] font-bold leading-3 text-[#56656a]">{tile.label}</span>
          </div>
        ))}
        {Array.from({ length: 21 }, (_, i) => (
          <div key={i} className="ml-[9px] mr-[9px] mt-px size-[42px] shrink-0 rounded-md bg-[#e5e5e5]" />
        ))}
      </div>
    </section>
  );
}

function BottomBar() {
  const cell = "flex w-[30px] items-center justify-center border-r border-[#bcbec0]";
  const tab = "w-[100px] border-r border-[#bcbec0]";
  return (
    <footer className="flex h-[22px] border-b border-[#eee] bg-[#dbdcde] text-[11px] text-[#222]">
      <div className="flex w-[36.25%] pl-0.5 text-[#666]">
        <button aria-label="Rafraîchir" className={cell}>
          <Icon w={14} h={14}><path d="M9.500 2.500a5.300 5.300 0 1 1-5.500 .5" strokeWidth="1.600" /><path d="M.500 1.500h5v5" strokeWidth="1.600" /></Icon>
        </button>
        <button aria-label="Effacer" className={cell}>
          <Icon w={14} h={14}><circle cx="7" cy="7" r="6" strokeWidth="1.300" /><path d="M3 11l8-8" strokeWidth="1.300" /></Icon>
        </button>
        <button aria-label="Dessiner" className={`${cell} bg-[#eceef1] text-[#0a80ff]`}>
          <Icon w={14} h={14}><path d="M1 13l1-4 6.500-6.500 3 3L5 12zM9.500 1.500l1-1 3 3-1 1z" fill="currentColor" stroke="none" /></Icon>
        </button>
        <button aria-label="Déplacer" className={`${cell} bg-[#eceef1] text-[#0a80ff]`}>
          <Icon w={12} h={12}><path d="M0 4l3.500-4L7 4v1H0zM5 7h7v1l-3.500 4L5 8z" fill="currentColor" stroke="none" /></Icon>
        </button>
      </div>
      <button className={`${tab} flex items-center justify-between bg-[#f4f4f4] pl-[9px] pr-2 text-[#0a7cff]`}>
        Favoris
        <Icon w={12} h={12}><path d="M6 0l1.600 4.200H12L8.500 7l1.300 4.700L6 9 2.200 11.700 3.500 7 0 4.200h4.400z" fill="currentColor" stroke="none" /></Icon>
      </button>
      <button className={tab}>Période</button>
      <button className={tab}>Outils De Dessin</button>
      <button className={tab}>Indicateurs</button>
      <button className={tab}>Figures</button>
      <div className="ml-auto flex border-l border-[#f0f0f0] text-[#666]">
        <button aria-label="Ajuster" className={cell}>
          <Icon w={13} h={13}><path d="M6.500 0v7M3.500 3.500h6M1 10.500h11M3.500 8L1 10.500 3.500 13M9.500 8l2.500 2.500L9.500 13" strokeWidth="1.300" /></Icon>
        </button>
        <button aria-label="Zoom arrière" className={cell}><Icon w={10} h={10}><path d="M0 5h10" strokeWidth="2" /></Icon></button>
        <button aria-label="Zoom avant" className={cell}><Icon w={10} h={10}><path d="M0 5h10M5 0v10" strokeWidth="1.700" /></Icon></button>
        <button aria-label="Réticule" className={`${cell} bg-[#eceef1] text-[#0a80ff]`}>
          <Icon w={13} h={13}><path d="M0 6.500h5.500M7.500 6.500H13M6.500 0v5.500M6.500 7.500V13" /></Icon>
        </button>
        <button aria-label="Échelle" className="flex w-[29px] items-center justify-center bg-[#eceef1] text-[#0a80ff]">
          <Icon w={13} h={13}><path d="M0 6.500h13M6.500 0v4.500M6.500 8.500V13M4 2.500L6.500 0 9 2.500M4 10.500L6.500 13 9 10.500" strokeWidth="1.300" /></Icon>
        </button>
      </div>
    </footer>
  );
}

export default function App() {
  return (
    <div className="flex h-screen flex-col overflow-hidden bg-[#eee] font-['Liberation_Sans',Arial,sans-serif]">
      <Header />
      <WorkspaceTabs />
      <ChartTabs />
      <ChartToolbar />
      <Chart />
      <DrawingTools />
      <BottomBar />
    </div>
  );
}
